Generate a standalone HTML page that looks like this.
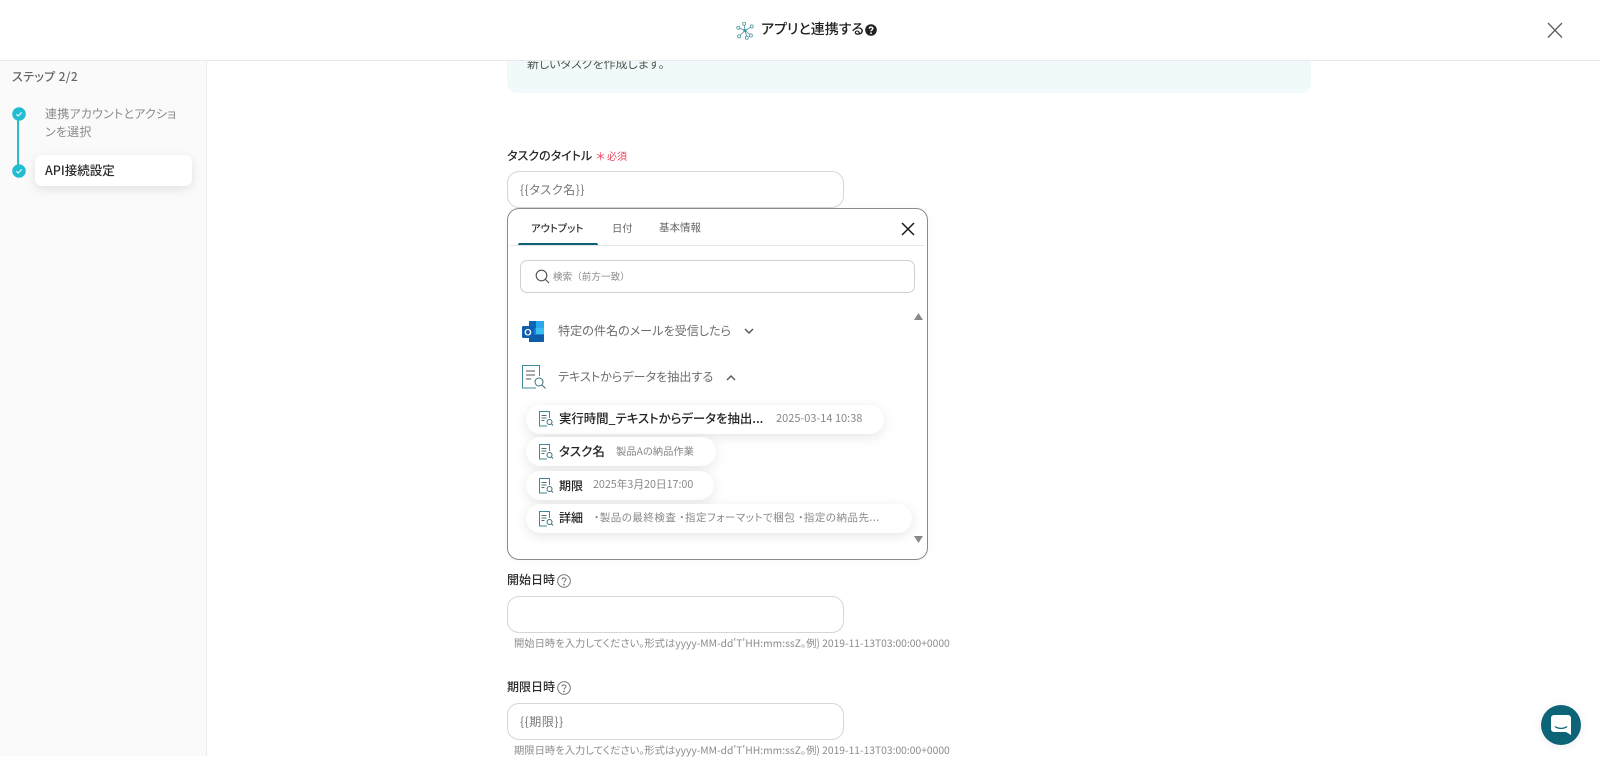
<!DOCTYPE html>
<html lang="ja"><head><meta charset="utf-8"><style>
*{box-sizing:border-box}
html,body{margin:0;padding:0;width:1600px;height:756px;overflow:hidden;background:#fff;font-family:"Noto Sans CJK JP","Liberation Sans",sans-serif;font-feature-settings:"palt";color:#2b2b2b}
.a{position:absolute;white-space:nowrap;line-height:1}
.box{position:absolute;background:#fff;border:1px solid #d6d6d6;border-radius:12px}
.pill{position:absolute;background:#fff;border-radius:15px;box-shadow:0 3px 12px rgba(0,0,0,.1);height:29px;left:526px}
svg{position:absolute;overflow:visible}
</style></head><body>
<div class="a" style="left:0;top:61px;width:207px;height:695px;background:#fafafa;border-right:1px solid #ececec"></div>
<div class="a" style="left:507px;top:50px;width:804px;height:43px;background:#f1fafa;border-radius:10px"></div>
<div class="a" style="left:527px;top:58px;font-size:12px;color:#555">新しいタスクを作成します。</div>
<div class="a" style="left:0;top:0;width:1600px;height:61px;background:#fff;border-bottom:1px solid #e9e9e9"></div>

<svg style="left:736px;top:21px" width="18" height="19" viewBox="0 0 20 20" fill="none" stroke="#4b96a3" stroke-width=".9"><path d="M10 10 9 3M10 10l7-4M10 10l6 5M10 10l2 7M10 10l-6 6M10 10 3 7"/><circle cx="9" cy="2.500" r="1.700" fill="#fff"/><circle cx="17.500" cy="5.500" r="1.700" fill="#fff"/><circle cx="16.500" cy="15.500" r="1.700" fill="#fff"/><circle cx="12" cy="18" r="1.700" fill="#fff"/><circle cx="3.500" cy="16.500" r="1.700" fill="#fff"/><circle cx="2.500" cy="7" r="1.700" fill="#fff"/><circle cx="10" cy="10" r="1.400" fill="#4b96a3"/></svg>
<div class="a" style="left:761px;top:22px;font-size:14px;font-weight:500;color:#222">アプリと連携する</div>
<svg style="left:865px;top:24px" width="12" height="12" viewBox="0 0 12 12"><circle cx="6" cy="6" r="5.800" fill="#222"/><path d="M4.300 4.600C4.400 2.600 7.800 2.700 7.800 4.600 7.800 5.900 6 5.900 6 7.200" fill="none" stroke="#fff" stroke-width="1.400"/><circle cx="6" cy="9.200" r=".9" fill="#fff"/></svg>
<svg style="left:1547px;top:23px" width="16" height="15" viewBox="0 0 16 15" fill="none" stroke="#5f5f5f" stroke-width="1.300"><path d="M1 0 15 14.500M15 0 1 14.500"/></svg>

<div class="a" style="left:12px;top:71px;font-size:12px;font-weight:500;color:#666;letter-spacing:.35px">ステップ 2/2</div>
<div class="a" style="left:17px;top:114px;width:2px;height:58px;background:#2bbccb"></div>
<svg style="left:12px;top:107px" width="14" height="14" viewBox="0 0 14 14"><circle cx="7" cy="7" r="6.800" fill="#22bdd0"/><path d="M4.300 7.200 6.200 9l3.500-3.600" fill="none" stroke="#fff" stroke-width="1"/></svg>
<svg style="left:12px;top:164px" width="14" height="14" viewBox="0 0 14 14"><circle cx="7" cy="7" r="6.800" fill="#22bdd0"/><path d="M4.300 7.200 6.200 9l3.500-3.600" fill="none" stroke="#fff" stroke-width="1"/></svg>
<div class="a" style="left:45px;top:105px;font-size:12px;letter-spacing:.2px;color:#8a8a8a;line-height:17.500px;white-space:normal;width:138px">連携アカウントとアクションを選択</div>
<div class="a" style="left:35px;top:155px;width:157px;height:31px;background:#fff;border-radius:7px;box-shadow:0 3px 10px rgba(0,0,0,.1)"></div>
<div class="a" style="left:45px;top:164px;font-size:12.500px;font-weight:500;color:#2a2a2a">API接続設定</div>

<div class="a" style="left:507px;top:150px;font-size:12px;font-weight:500;color:#2b2b2b">タスクのタイトル</div>
<div class="a" style="left:596px;top:151px;font-size:11px;color:#e8475f">＊</div>
<div class="a" style="left:607px;top:151px;font-size:10px;color:#e8475f">必須</div>
<div class="box" style="left:507px;top:171px;width:337px;height:37px"></div>
<div class="a" style="left:520px;top:184px;font-size:12px;letter-spacing:.6px;color:#777">{{タスク名}}</div>

<div class="box" style="left:507px;top:208px;width:421px;height:352px;border-color:#8a8a8a;box-shadow:0 0 10px rgba(0,0,0,.03)"></div>
<div class="a" style="left:531px;top:223px;font-size:10.300px;font-weight:500;color:#333">アウトプット</div>
<div class="a" style="left:612px;top:223px;font-size:10.300px;color:#666">日付</div>
<div class="a" style="left:659px;top:223px;font-size:10.500px;color:#666">基本情報</div>
<div class="a" style="left:518px;top:243px;width:80px;height:3px;background:#0e5f74;border-radius:2px 2px 0 0"></div>
<div class="a" style="left:510px;top:245px;width:415px;height:1px;background:#e8e8e8"></div>
<svg style="left:902px;top:223px" width="12" height="12" viewBox="0 0 12 12" fill="none" stroke="#1a1a1a" stroke-width="1.500"><path d="M0 0 12 12M12 0 0 12"/></svg>

<div class="box" style="left:520px;top:260px;width:395px;height:33px;border-radius:7px;border-color:#d0d0d0"></div>
<svg style="left:535px;top:269px" width="15" height="15" viewBox="0 0 15 15" fill="none" stroke="#555" stroke-width="1.200"><circle cx="6.500" cy="6.500" r="5.300"/><path d="M10.500 10.500 14 14"/></svg>
<div class="a" style="left:553px;top:272px;font-size:9.500px;letter-spacing:.1px;font-feature-settings:normal;color:#888">検索（前方一致）</div>

<svg style="left:914px;top:313px" width="9" height="230" viewBox="0 0 9 230" fill="#888"><path d="M4.500 0 9 7H0zM0 223h9l-4.500 7z"/></svg>

<svg style="left:522px;top:320px" width="23" height="23" viewBox="0 0 23 23"><path d="M7 1h14a1 1 0 0 1 1 1v19a1 1 0 0 1-1 1H7z" fill="#1a7fd6"/><rect x="14" y="1" width="8" height="7" fill="#29a8ea"/><rect x="7" y="1" width="7" height="7" fill="#0d66b8"/><rect x="14" y="8" width="8" height="6" fill="#39c0f0"/><path d="M7 15h15v6a1 1 0 0 1-1 1H7z" fill="#0e5ba8"/><rect x="0" y="6" width="12" height="12" rx="1.500" fill="#0f5fb0"/><text x="6" y="15.500" font-size="9.500" font-weight="700" fill="#fff" text-anchor="middle" font-family="Liberation Sans">O</text></svg>
<div class="a" style="left:558px;top:325px;font-size:12.100px;color:#6d6d6d">特定の件名のメールを受信したら</div>
<svg style="left:744px;top:328px" width="10" height="7" viewBox="0 0 10 7" fill="none" stroke="#555" stroke-width="1.400"><path d="M1 1 5 5 9 1"/></svg>

<svg style="left:522px;top:365px" width="24" height="24" viewBox="0 0 24 24" fill="none" stroke="#3f8a96" stroke-width="1"><path d="M14 23H.5V.5h17V11"/><path d="M4 6h9M4 10h9M4 14h5" stroke="#555"/><circle cx="17" cy="17" r="4" stroke="#3a6f78"/><path d="M20 20 23.500 23.500" stroke="#3a6f78"/></svg>
<div class="a" style="left:558px;top:371px;font-size:12.100px;color:#6d6d6d">テキストからデータを抽出する</div>
<svg style="left:726px;top:374px" width="10" height="7" viewBox="0 0 10 7" fill="none" stroke="#555" stroke-width="1.400"><path d="M1 6 5 2 9 6"/></svg>

<div class="pill" style="top:405px;width:358px"></div>
<div class="pill" style="top:437px;width:190px"></div>
<div class="pill" style="top:471px;width:188px"></div>
<div class="pill" style="top:504px;width:386px"></div>

<svg style="left:539px;top:411px" width="15" height="16" viewBox="0 0 15 16" fill="none" stroke="#3f8a96" stroke-width="1"><path d="M8 15H.5V.5h10V7"/><path d="M2.500 4.500h5M2.500 7h5M2.500 9.500h3" stroke="#4b6f75"/><circle cx="10.500" cy="11" r="2.500" stroke="#3a6f78"/><path d="M12.500 13 14 14.500" stroke="#3a6f78"/></svg>
<svg style="left:539px;top:444px" width="15" height="16" viewBox="0 0 15 16" fill="none" stroke="#3f8a96" stroke-width="1"><path d="M8 15H.5V.5h10V7"/><path d="M2.500 4.500h5M2.500 7h5M2.500 9.500h3" stroke="#4b6f75"/><circle cx="10.500" cy="11" r="2.500" stroke="#3a6f78"/><path d="M12.500 13 14 14.500" stroke="#3a6f78"/></svg>
<svg style="left:539px;top:478px" width="15" height="16" viewBox="0 0 15 16" fill="none" stroke="#3f8a96" stroke-width="1"><path d="M8 15H.5V.5h10V7"/><path d="M2.500 4.500h5M2.500 7h5M2.500 9.500h3" stroke="#4b6f75"/><circle cx="10.500" cy="11" r="2.500" stroke="#3a6f78"/><path d="M12.500 13 14 14.500" stroke="#3a6f78"/></svg>
<svg style="left:539px;top:511px" width="15" height="16" viewBox="0 0 15 16" fill="none" stroke="#3f8a96" stroke-width="1"><path d="M8 15H.5V.5h10V7"/><path d="M2.500 4.500h5M2.500 7h5M2.500 9.500h3" stroke="#4b6f75"/><circle cx="10.500" cy="11" r="2.500" stroke="#3a6f78"/><path d="M12.500 13 14 14.500" stroke="#3a6f78"/></svg>

<div class="a" style="left:559px;top:412px;font-size:12.400px;font-weight:500;color:#222">実行時間_テキストからデータを抽出...</div>
<div class="a" style="left:776px;top:413px;font-size:11px;color:#888">2025-03-14 10:38</div>
<div class="a" style="left:559px;top:445px;font-size:12.500px;font-weight:500;color:#222">タスク名</div>
<div class="a" style="left:616px;top:446px;font-size:10.300px;color:#888">製品Aの納品作業</div>
<div class="a" style="left:559px;top:480px;font-size:12px;font-weight:500;color:#222">期限</div>
<div class="a" style="left:593px;top:480px;font-size:10.700px;color:#888">2025年3月20日17:00</div>
<div class="a" style="left:559px;top:512px;font-size:12px;font-weight:500;color:#222">詳細</div>
<div class="a" style="left:594px;top:513px;font-size:10.500px;letter-spacing:.5px;color:#888">・製品の最終検査 ・指定フォーマットで梱包 ・指定の納品先...</div>

<div class="a" style="left:507px;top:574px;font-size:12px;font-weight:500;color:#2b2b2b">開始日時</div>
<svg style="left:557px;top:574px" width="14" height="14" viewBox="0 0 14 14" fill="none" stroke="#666" stroke-width=".9"><circle cx="7" cy="7" r="6.300"/><path d="M5 5.500C5.100 3.300 9 3.400 9 5.500 9 7 7 6.800 7 8.500"/><circle cx="7" cy="10.500" r=".4"/></svg>
<div class="box" style="left:507px;top:596px;width:337px;height:37px"></div>
<div class="a" style="left:514px;top:638px;font-size:10.300px;color:#8c8c8c">開始日時を入力してください。形式はyyyy-MM-dd'T'HH:mm:ssZ。例) 2019-11-13T03:00:00+0000</div>

<div class="a" style="left:507px;top:681px;font-size:12px;font-weight:500;color:#2b2b2b">期限日時</div>
<svg style="left:557px;top:681px" width="14" height="14" viewBox="0 0 14 14" fill="none" stroke="#666" stroke-width=".9"><circle cx="7" cy="7" r="6.300"/><path d="M5 5.500C5.100 3.300 9 3.400 9 5.500 9 7 7 6.800 7 8.500"/><circle cx="7" cy="10.500" r=".4"/></svg>
<div class="box" style="left:507px;top:703px;width:337px;height:37px"></div>
<div class="a" style="left:520px;top:716px;font-size:12px;letter-spacing:.6px;color:#777">{{期限}}</div>
<div class="a" style="left:514px;top:745px;font-size:10.300px;color:#8c8c8c">期限日時を入力してください。形式はyyyy-MM-dd'T'HH:mm:ssZ。例) 2019-11-13T03:00:00+0000</div>

<div class="a" style="left:1541px;top:705px;width:40px;height:40px;border-radius:50%;background:#0e6477;box-shadow:0 1px 10px rgba(0,0,0,.08)"></div>
<svg style="left:1551px;top:715px" width="20" height="21" viewBox="0 0 20 21"><path d="M3 0h14a3 3 0 0 1 3 3v17l-5-3H3a3 3 0 0 1-3-3V3a3 3 0 0 1 3-3z" fill="#fff"/><path d="M4 11.500c3 2.500 9 2.500 12 0" fill="none" stroke="#0e6477" stroke-width="1.200"/></svg>
</body></html>
